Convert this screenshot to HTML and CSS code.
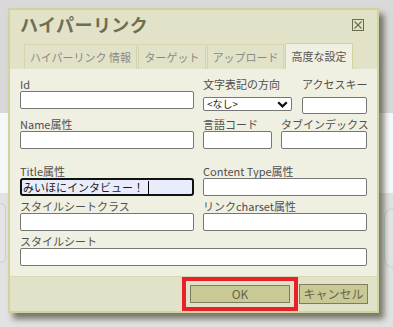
FILE: index.html
```html
<!DOCTYPE html>
<html lang="ja">
  <head>
    <meta charset="UTF-8" />
    <meta name="viewport" content="width=device-width, initial-scale=1.0" />
    <title>ハイパーリンク</title>
    <link rel="stylesheet" href="styles.css">
  </head>
  <body>
    <div class="page">
      <div class="page-top"></div>
      <div class="page-band"></div>
      <div class="page-lower">
        <div class="card card-left"></div>
        <div class="card card-right"></div>
      </div>
    </div>

    <div class="dialog">
      <div class="title-row">
        <h1 class="title">ハイパーリンク</h1>
        <svg class="close" width="12" height="12" viewBox="0 0 12 12">
          <rect x="0.5" y="0.5" width="11" height="11" fill="none" stroke="#6b6b4e" />
          <path d="M2.5 2.5 L9.5 9.5 M9.5 2.5 L2.5 9.5" stroke="#6b6b4e" stroke-width="1.1" />
        </svg>
      </div>
      <div class="tabs">
        <span class="tab tab1">ハイパーリンク 情報</span>
        <span class="tab tab2">ターゲット</span>
        <span class="tab tab3">アップロード</span>
        <span class="tab tab4 active">高度な設定</span>
      </div>

      <div class="dialog-body">
        <div class="row row-a">
          <div class="field col-left">
            <label>Id</label>
            <input type="text" class="text" />
          </div>
          <div class="col-right split">
            <div class="field w-dir">
              <label>文字表記の方向</label>
              <div class="select-wrap">
                <select class="select">
                  <option>&lt;なし&gt;</option>
                </select>
                <svg class="chevron" width="11" height="7" viewBox="0 0 11 7">
                  <path d="M1.2 1.2 L5.5 5.4 L9.8 1.2" fill="none" stroke="#111" stroke-width="2.2" />
                </svg>
              </div>
            </div>
            <div class="field w-key">
              <label>アクセスキー</label>
              <input type="text" class="text low" />
            </div>
          </div>
        </div>

        <div class="row row-b">
          <div class="field col-left">
            <label>Name属性</label>
            <input type="text" class="text" />
          </div>
          <div class="col-right split split-b">
            <div class="field w-lang">
              <label>言語コード</label>
              <input type="text" class="text" />
            </div>
            <div class="field w-tab">
              <label>タブインデックス</label>
              <input type="text" class="text" />
            </div>
          </div>
        </div>

        <div class="row row-c">
          <div class="field col-left">
            <label>Title属性</label>
            <div class="text focused">みいほにインタビュー！<span class="caret"></span></div>
          </div>
          <div class="field col-right">
            <label>Content Type属性</label>
            <input type="text" class="text" />
          </div>
        </div>

        <div class="row row-d">
          <div class="field col-left">
            <label>スタイルシートクラス</label>
            <input type="text" class="text" />
          </div>
          <div class="field col-right">
            <label>リンクcharset属性</label>
            <input type="text" class="text" />
          </div>
        </div>

        <div class="row row-e">
          <div class="field col-full">
            <label>スタイルシート</label>
            <input type="text" class="text" />
          </div>
        </div>
      </div>

      <div class="dialog-foot">
        <span class="mark"><button class="btn btn-ok">OK</button></span>
        <button class="btn btn-cancel">キャンセル</button>
      </div>
    </div>
  </body>
</html>
```

FILE: styles.css
```css
* {
  box-sizing: border-box;
}
body {
  margin: 0;
  width: 393px;
  height: 327px;
  overflow: hidden;
  position: relative;
  font-family: "Noto Sans CJK JP", "Noto Sans", sans-serif;
  background: #e2e2e2;
}

/* page behind the dialog */
.page-top {
  height: 113px;
  background: #d9d9d9;
}
.page-band {
  height: 80px;
  background: #f7f8fa;
}
.page-lower {
  display: flex;
  justify-content: space-between;
  padding-top: 10px;
}
.card {
  height: 60px;
  border: 1px solid #c9d3c9;
  background: #e4e4e4;
}
.card-left {
  width: 6px;
  border-left: 0;
  border-radius: 0 10px 10px 0;
}
.card-right {
  width: 9px;
  border-right: 0;
  border-radius: 10px 0 0 10px;
  margin-top: 5px;
}

/* dialog */
.dialog {
  position: absolute;
  left: 8px;
  top: 8px;
  width: 371px;
  height: 305px;
  border: 2px solid #d3d39f;
  background: #e2e2c9;
  box-shadow: 5px 6px 6px rgba(45, 45, 25, 0.6);
}
.title-row {
  display: flex;
  justify-content: space-between;
  height: 34px;
  padding: 0 13px 0 10px;
}
.title {
  margin: 0;
  font-size: 18px;
  line-height: 28px;
  font-weight: bold;
  letter-spacing: 0.4px;
  color: #6e6e50;
}
.close {
  margin-top: 9px;
}
.tabs {
  display: flex;
  gap: 1px;
  height: 25px;
  padding-left: 14px;
  align-items: flex-end;
}
.tab {
  height: 25px;
  border: 1px solid #d5d5ad;
  border-bottom: 0;
  font-size: 11px;
  line-height: 24px;
  text-align: center;
  color: #8a8a84;
  white-space: nowrap;
}
.tab1 { width: 113px; }
.tab2 { width: 68px; }
.tab3 { width: 77px; }
.tab4 { width: 68px; }
.tab.active {
  height: 26px;
  background: #efefe2;
  border-color: #d3d3a0;
  color: #555;
}

.dialog-body {
  height: 207px;
  background: #efefe2;
  padding: 9px 10px 0 10px;
}
.row {
  display: flex;
  gap: 9px;
}
.row-b { margin-top: 4px; }
.row-c { margin-top: 16px; }
.row-d { margin-top: 4px; }
.row-e { margin-top: 4px; }

.field {
  display: flex;
  flex-direction: column;
}
.field label {
  font-size: 11px;
  line-height: 13px;
  height: 13px;
  color: #505050;
  white-space: nowrap;
}
.col-left { width: 174px; }
.col-right { width: 164px; }
.col-full { width: 347px; }
.split {
  display: flex;
  gap: 10px;
}
.split-b { gap: 9px; }
.w-dir { width: 89px; }
.w-key { width: 65px; }
.w-lang { width: 69px; }
.w-tab { width: 86px; }

.text {
  width: 100%;
  height: 18px;
  margin: 0;
  border: 1px solid #767676;
  border-radius: 2px;
  background: #fff;
  font-family: inherit;
  font-size: 11px;
}
.text.low {
  margin-top: 6px;
  height: 17px;
}
.text.focused {
  border: 2px solid #111;
  border-radius: 3px;
  background: #e9edfb;
  color: #1a1a1a;
  line-height: 14px;
  padding-left: 1px;
  white-space: nowrap;
}
.caret {
  display: inline-block;
  width: 1px;
  height: 13px;
  margin-left: 4px;
  vertical-align: -2px;
  background: #000;
}

.select-wrap {
  position: relative;
  margin-top: 6px;
}
.select {
  display: block;
  width: 100%;
  height: 14px;
  appearance: none;
  border: 1px solid #767676;
  border-radius: 2px;
  background: #fff;
  padding: 0 0 0 3px;
  font-family: inherit;
  font-size: 10px;
  line-height: 12px;
  color: #222;
}
.chevron {
  position: absolute;
  right: 4px;
  top: 4px;
}

.dialog-foot {
  height: 35px;
  border-top: 1px solid #d9d9b8;
  display: flex;
  justify-content: flex-end;
  align-items: center;
  gap: 1px;
  padding-right: 9px;
}
.mark {
  display: flex;
  border: 4px solid #e8202a;
  padding: 4px;
}
.btn {
  margin: 0;
  border: 1px solid #7e7e5e;
  background: #c9c996;
  font-family: inherit;
  font-size: 12px;
  color: #66664a;
  padding: 0;
}
.btn-ok {
  width: 100px;
  height: 18px;
  line-height: 16px;
}
.btn-cancel {
  width: 69px;
  height: 20px;
  line-height: 18px;
}
```
